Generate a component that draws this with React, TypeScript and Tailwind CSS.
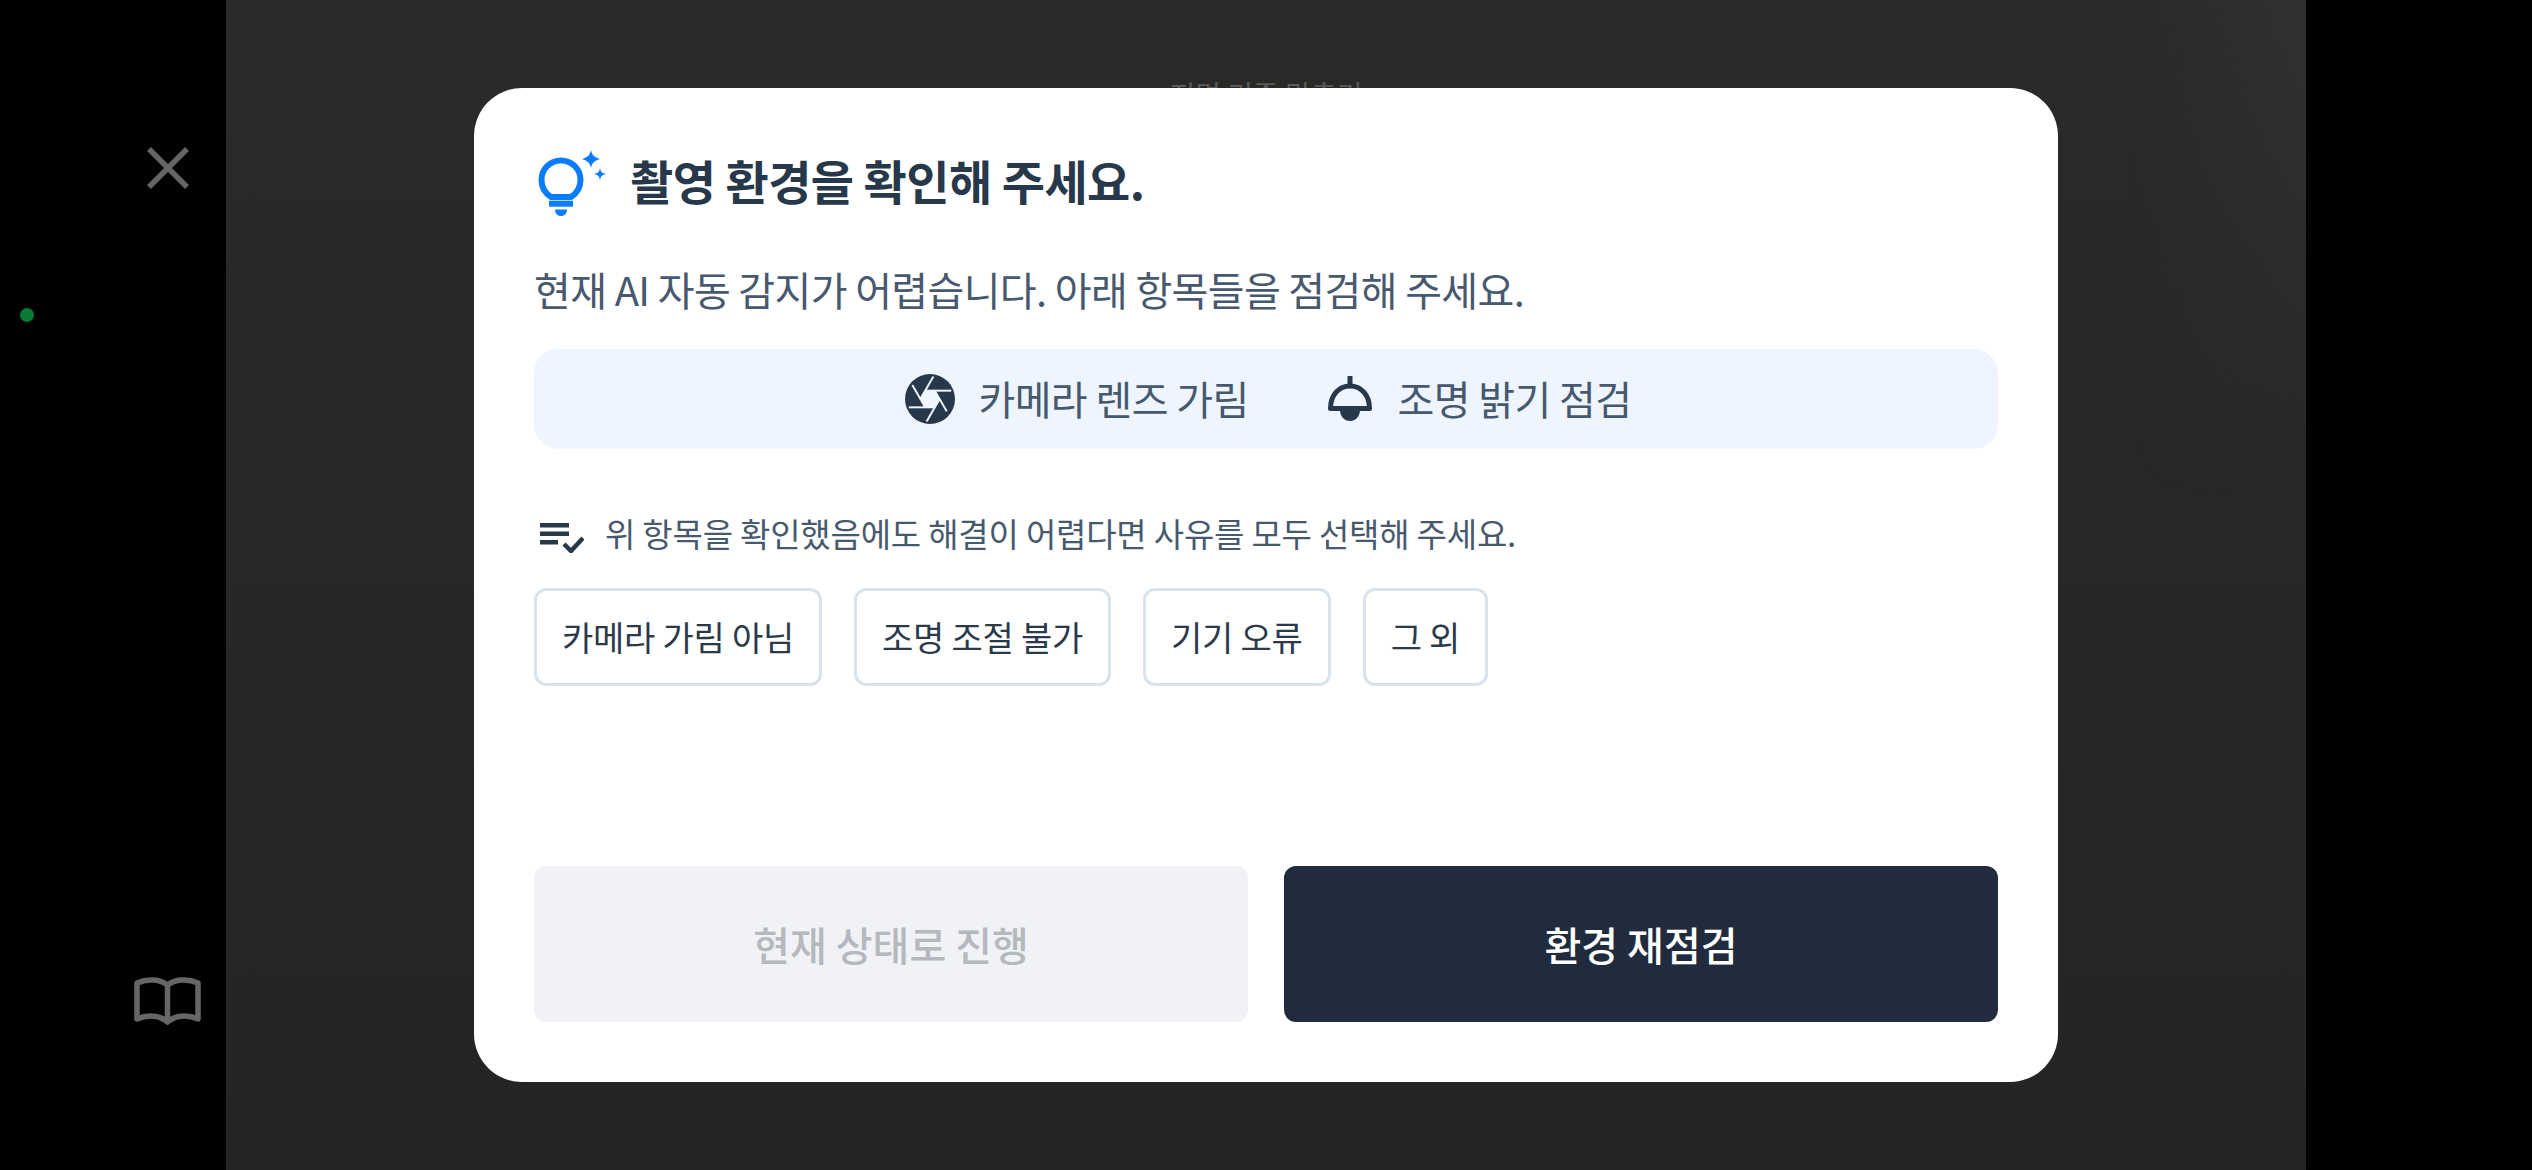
const font = '"Noto Sans CJK KR", "Noto Sans KR", sans-serif';

function Bulb() {
  return (
    <svg width="74" height="70" viewBox="0 0 74 70" className="mt-[4px] shrink-0">
      <path d="M17 47 C11 43 7.500 37 7.500 30 C7.500 19 16 10.500 27 10.500 C38 10.500 46.500 19 46.500 30 C46.500 37 43 43 37 47 Z" fill="none" stroke="#0a7cff" strokeWidth="6" strokeLinejoin="round" />
      <rect x="15" y="50.700" width="24" height="6" fill="#0a7cff" />
      <path d="M21 59.500 H33 C33 63.500 30.500 66 27 66 C23.500 66 21 63.500 21 59.500 Z" fill="#0a7cff" />
      <path d="M57 0 C58 5 60 7 66 9 C60 11 58 13 57 18 C56 13 54 11 48 9 C54 7 56 5 57 0 Z" fill="#0a7cff" />
      <path d="M66 18 C66.800 22 68 23 72 24 C68 25 66.800 26 66 30 C65.200 26 64 25 60 24 C64 23 65.200 22 66 18 Z" fill="#0a7cff" />
    </svg>
  );
}

function Aperture() {
  return (
    <svg width="50" height="50" viewBox="0 0 24 24" className="shrink-0">
      <circle cx="12" cy="12" r="12" fill="#26384a" />
      <polygon points="9.690,8 14.310,8 16.620,12 14.310,16 9.690,16 7.380,12" fill="#eff6ff" />
      <g stroke="#eff6ff" strokeWidth="0.95" fill="none">
        <path d="M14.310 8l5.740 9.940" />
        <path d="M9.690 8h12.500" />
        <path d="M7.380 12l6.250-10.800" />
        <path d="M9.690 16L3.500 5.300" />
        <path d="M14.310 16H1.800" />
        <path d="M16.620 12l-6.250 10.800" />
      </g>
    </svg>
  );
}

function Lamp() {
  return (
    <svg width="46" height="46" viewBox="0 0 46 46" className="shrink-0">
      <path d="M23 0 V10" stroke="#26384a" strokeWidth="5" />
      <path d="M3.500 32.500 C3.500 19 12 10 23 10 C34 10 42.500 19 42.500 32.500 Z" fill="none" stroke="#26384a" strokeWidth="5" strokeLinejoin="round" />
      <path d="M13 34 H33 C33 40.500 28.500 45 23 45 C17.500 45 13 40.500 13 34 Z" fill="#26384a" />
    </svg>
  );
}

function ListCheck() {
  return (
    <svg width="44" height="30" viewBox="0 0 44 30" className="mt-[6px] shrink-0">
      <rect x="0" y="0" width="29" height="4.500" fill="#26384a" />
      <rect x="0" y="8.500" width="29" height="4.500" fill="#26384a" />
      <rect x="0" y="17" width="18" height="4.500" fill="#26384a" />
      <path d="M24 21 L31 28 L43 15" fill="none" stroke="#26384a" strokeWidth="4.500" />
    </svg>
  );
}

function Chip({ children }: { children: string }) {
  return (
    <button className="h-[98px] rounded-[12px] border-[3px] border-[#d9e3ec] bg-white px-[25px] pb-[2px] text-[34px] tracking-[-0.007em] text-[#2a3a4a]">
      {children}
    </button>
  );
}

export default function App() {
  return (
    <div className="relative flex h-[1170px] w-[2532px] overflow-hidden bg-black" style={{ fontFamily: font }}>
      <aside className="relative flex w-[226px] shrink-0 flex-col items-end justify-between pt-[147px] pb-[144px] pr-[25px]">
        <svg width="42" height="42" viewBox="0 0 42 42" className="mr-[12px]">
          <path d="M2 2 L40 40 M40 2 L2 40" stroke="#666666" strokeWidth="5.500" />
        </svg>
        <svg width="68" height="50" viewBox="0 0 68 50">
          <path d="M34.500 9 C27.500 3.500 15 2 4 7 V43 C15 38 27.500 39.500 34.500 46 C41.500 39.500 54 38 65 43 V7 C54 2 41.500 3.500 34.500 9 Z M34.500 9 V46" fill="none" stroke="#666666" strokeWidth="5.500" strokeLinejoin="round" />
        </svg>
        <span className="absolute left-[20px] top-[308px] h-[14px] w-[14px] rounded-full bg-[#0a7a32]" />
      </aside>

      <main className="relative w-[2080px] shrink-0 bg-gradient-to-b from-[#2a2a29] to-[#242423] pt-[76px] text-center text-[28px] leading-[36px] text-[#5a5a5a]">
        지면 기준 맞추기
        <div className="absolute right-0 top-0 h-[500px] w-[180px] bg-gradient-to-r from-transparent to-[#343434] opacity-70 [mask-image:linear-gradient(to_bottom,black,transparent)]" />
      </main>
      <div className="w-[226px] shrink-0 bg-black" />

      <div className="absolute inset-0 flex items-center justify-center">
        <section className="flex h-[994px] w-[1584px] flex-col rounded-[48px] bg-white p-[60px]">
          <div className="flex h-[70px] items-center gap-[22px]">
            <Bulb />
            <h1 className="pb-[6px] text-[47px] font-bold leading-[70px] tracking-[-0.012em] text-[#26384a]">촬영 환경을 확인해 주세요.</h1>
          </div>
          <p className="mt-[41px] text-[40px] leading-[60px] tracking-[-0.016em] text-[#47596e]">
            현재 AI 자동 감지가 어렵습니다. 아래 항목들을 점검해 주세요.
          </p>
          <div className="mt-[30px] flex h-[100px] items-center justify-center gap-[78px] rounded-[24px] bg-[#eef5ff] pl-[5px] text-[40px] tracking-[-0.015em] text-[#47596e]">
            <div className="flex items-center gap-[23px]">
              <Aperture />
              <span className="pb-[3px]">카메라 렌즈 가림</span>
            </div>
            <div className="flex items-center gap-[25px]">
              <Lamp />
              <span className="pb-[3px]">조명 밝기 점검</span>
            </div>
          </div>
          <div className="mt-[64px] flex h-[44px] items-center gap-[21px] pl-[6px] text-[33px] tracking-[-0.006em] text-[#47596e]">
            <ListCheck />
            <span className="pb-[2px]">위 항목을 확인했음에도 해결이 어렵다면 사유를 모두 선택해 주세요.</span>
          </div>
          <div className="mt-[31px] flex gap-[32px]">
            <Chip>카메라 가림 아님</Chip>
            <Chip>조명 조절 불가</Chip>
            <Chip>기기 오류</Chip>
            <Chip>그 외</Chip>
          </div>
          <div className="mt-auto grid grid-cols-2 gap-[36px]">
            <button className="h-[156px] rounded-[12px] bg-[#f0f2f6] text-[40px] font-medium text-[#b5b8bd]">현재 상태로 진행</button>
            <button className="h-[156px] rounded-[12px] bg-[#202c3e] text-[40px] font-medium text-white">환경 재점검</button>
          </div>
        </section>
      </div>
    </div>
  );
}
